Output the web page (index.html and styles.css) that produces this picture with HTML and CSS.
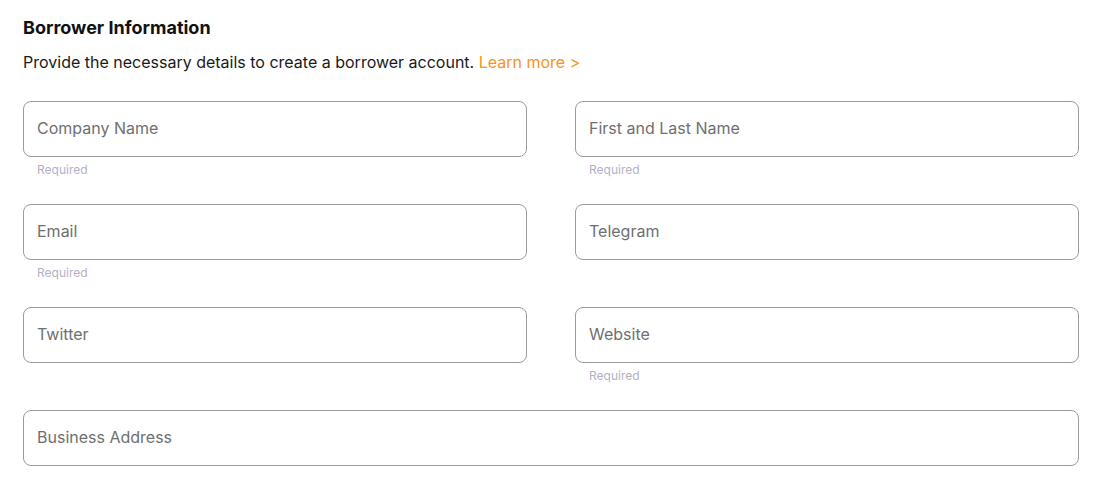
FILE: index.html
```html
<!DOCTYPE html>
<html lang="en">
<head>
  <meta charset="UTF-8">
  <meta name="viewport" content="width=device-width, initial-scale=1.0">
  <title>Borrower Information</title>
  <link rel="stylesheet" href="styles.css">
</head>
<body>
  <div class="form-section">
    <h2>Borrower Information</h2>
    <p class="intro">Provide the necessary details to create a borrower account. <a href="#" class="learn-more">Learn more &gt;</a></p>

    <div class="fields">
      <div class="field">
        <input type="text" placeholder="Company Name">
        <span class="hint">Required</span>
      </div>
      <div class="field">
        <input type="text" placeholder="First and Last Name">
        <span class="hint">Required</span>
      </div>
      <div class="field">
        <input type="email" placeholder="Email">
        <span class="hint">Required</span>
      </div>
      <div class="field">
        <input type="text" placeholder="Telegram">
      </div>
      <div class="field">
        <input type="text" placeholder="Twitter">
      </div>
      <div class="field">
        <input type="text" placeholder="Website">
        <span class="hint">Required</span>
      </div>
      <div class="field full">
        <input type="text" placeholder="Business Address">
      </div>
    </div>
  </div>
</body>
</html>
```

FILE: styles.css
```css
body {
  font-family: 'Inter', 'Liberation Sans', sans-serif;
  background: #ffffff;
  margin: 0;
  padding: 0;
}

.form-section {
  width: 1056px;
  padding: 17px 23px 0;
}

h2 {
  margin: 0;
  color: #111111;
  font-size: 18px;
  font-weight: 700;
  line-height: 22px;
}

p.intro {
  margin: 12px 0 0;
  font-size: 16px;
  line-height: 22px;
  color: #1a1a1a;
}

.learn-more {
  color: #f7931a;
  text-decoration: none;
}

.fields {
  display: grid;
  grid-template-columns: 1fr 1fr;
  column-gap: 48px;
  margin-top: 28px;
}

.field {
  height: 103px;
}

.field.full {
  grid-column: 1 / 3;
}

input {
  box-sizing: border-box;
  display: block;
  width: 100%;
  height: 56px;
  padding: 0 13px 2px;
  border: 1px solid #9b9b9b;
  border-radius: 8px;
  font-family: inherit;
  font-size: 16px;
  color: #222222;
  outline: none;
}

input::placeholder {
  color: #6f6f6f;
}

input:focus {
  border-color: #f7931a;
}

.hint {
  display: block;
  margin: 6px 0 0 14px;
  font-size: 12px;
  line-height: 14px;
  color: #b4b0c8;
}
```
